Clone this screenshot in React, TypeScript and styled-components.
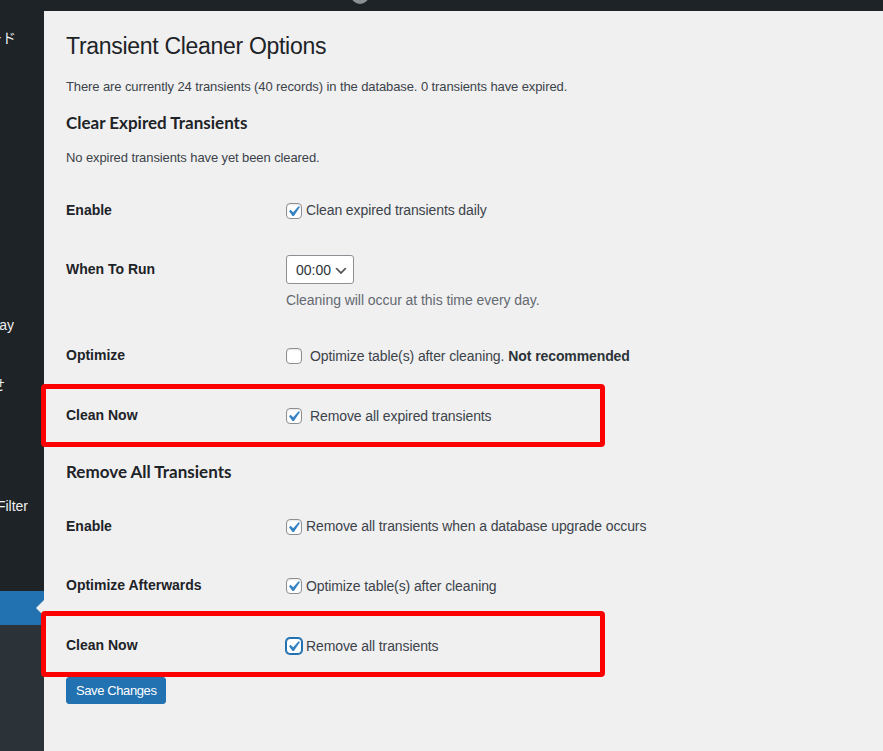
import React from "react";
import styled, { createGlobalStyle, css } from "styled-components";

const FONT = `"Segoe UI", "Liberation Sans", Arial, "Noto Sans CJK JP", sans-serif`;

const GlobalStyle = createGlobalStyle`
  *, *::before, *::after { box-sizing: border-box; }
  html, body { margin: 0; padding: 0; }
  body { background: #f0f0f1; font-family: ${FONT}; color: #3c434a; font-size: 13px; }
`;

const Shell = styled.div`
  display: flex;
  flex-direction: column;
  width: 100%;
  height: 751px;
  overflow: hidden;
  background: #f0f0f1;
`;

const AdminBar = styled.header`
  height: 11px;
  flex: none;
  background: #1d2327;
  display: flex;
  align-items: flex-start;
  padding-left: 351px;
  overflow: hidden;
`;

const AvatarStub = styled.span`
  width: 18px;
  height: 18px;
  border-radius: 50%;
  background: #8c8f94;
  margin-top: -14px;
`;

const Body = styled.div`
  flex: 1;
  display: grid;
  grid-template-columns: 44px 1fr;
  min-height: 0;
`;

const Sidebar = styled.nav`
  background: #1d2327;
  display: flex;
  flex-direction: column;
  overflow: hidden;
`;

const MenuItem = styled.div<{ $gap: number; $active?: boolean }>`
  position: relative;
  flex: none;
  height: 34px;
  margin-top: ${(p) => p.$gap}px;
  display: flex;
  align-items: center;
  color: #f0f0f1;
  font-size: 14px;
  ${(p) =>
    p.$active &&
    css`
      background: #2271b1;
      color: #fff;
      &::after {
        content: "";
        position: absolute;
        right: 0;
        top: 50%;
        margin-top: -8px;
        border: 8px solid transparent;
        border-right-color: #f0f0f1;
      }
    `}
`;

const MenuLabel = styled.span<{ $end: number }>`
  width: ${(p) => p.$end}px;
  overflow: hidden;
  white-space: nowrap;
  display: flex;
  justify-content: flex-end;
  line-height: 18px;
`;

const Submenu = styled.div`
  flex: 1;
  background: #2c3338;
`;

const Content = styled.main`
  display: flex;
  flex-direction: column;
  padding: 0 20px 0 22px;
  min-width: 0;
`;

const Title = styled.h1`
  margin: 20px 0 0;
  font-size: 23px;
  font-weight: 400;
  line-height: 30px;
  letter-spacing: -0.3px;
  color: #1d2327;
`;

const Text = styled.p<{ $mt: number }>`
  margin: ${(p) => p.$mt}px 0 0;
  font-size: 13px;
  line-height: 19px;
  letter-spacing: -0.1px;
  color: #3c434a;
`;

const SectionTitle = styled.h2<{ $mt: number }>`
  margin: ${(p) => p.$mt}px 0 0;
  font-family: Lato, ${FONT};
  font-size: 17px;
  font-weight: 700;
  line-height: 22px;
  color: #1d2327;
`;

const FormTable = styled.div<{ $mt: number }>`
  margin-top: ${(p) => p.$mt}px;
  display: flex;
  flex-direction: column;
`;

type Mark = { top: number; height: number };

const Row = styled.div<{ $h: number; $mark?: Mark }>`
  position: relative;
  display: grid;
  grid-template-columns: 220px 1fr;
  height: ${(p) => p.$h}px;
  ${(p) =>
    p.$mark &&
    css`
      &::after {
        content: "";
        position: absolute;
        z-index: 2;
        left: -25px;
        width: 564px;
        top: ${p.$mark.top}px;
        height: ${p.$mark.height}px;
        border: 5px solid #ff0000;
        border-radius: 4px;
        pointer-events: none;
      }
    `}
`;

const Label = styled.div`
  padding-top: 20px;
  font-size: 14px;
  font-weight: 600;
  line-height: 19px;
  color: #1d2327;
`;

const Field = styled.div<{ $stack?: boolean }>`
  display: flex;
  ${(p) =>
    p.$stack
      ? css`
          flex-direction: column;
          align-items: flex-start;
          padding-top: 15px;
        `
      : css`
          align-items: center;
        `}
`;

const CheckLabel = styled.label<{ $gap: number }>`
  display: inline-flex;
  align-items: center;
  gap: ${(p) => p.$gap}px;
  font-size: 14px;
  line-height: 19px;
  letter-spacing: -0.1px;
  color: #3c434a;
`;

const Box = styled.span<{ $focus?: boolean }>`
  position: relative;
  flex: none;
  width: 16px;
  height: 16px;
  border: 1px solid #8c8f94;
  border-radius: 4px;
  background: #fff;
  box-shadow: inset 0 1px 2px rgba(0, 0, 0, 0.1);
  ${(p) =>
    p.$focus &&
    css`
      border-color: #2271b1;
      box-shadow: 0 0 0 1px #2271b1;
    `}
`;

const Tick = styled.svg`
  position: absolute;
  left: -4px;
  top: -3px;
  width: 21px;
  height: 21px;
`;

const Strong = styled.strong`
  font-weight: 600;
  margin-left: 4px;
  color: #2c3338;
`;

const Select = styled.div`
  display: inline-flex;
  align-items: center;
  justify-content: space-between;
  width: 68px;
  height: 29px;
  padding: 0 4px 0 9px;
  border: 1px solid #8c8f94;
  border-radius: 3px;
  background: #fff;
  font-size: 14px;
  color: #2c3338;
`;

const Chevron = styled.svg`
  width: 16px;
  height: 16px;
  margin-top: 2px;
`;

const Description = styled.p`
  margin: 7px 0 0;
  font-size: 14px;
  line-height: 18px;
  letter-spacing: -0.05px;
  color: #646970;
`;

const Submit = styled.button`
  align-self: flex-start;
  margin-top: 1px;
  height: 27px;
  padding: 0 9px;
  background: #2271b1;
  border: 1px solid #2271b1;
  border-radius: 3px;
  color: #fff;
  font-family: ${FONT};
  font-size: 13px;
  letter-spacing: -0.4px;
  line-height: 25px;
  cursor: pointer;
`;

function Checkbox({ checked, focus }: { checked?: boolean; focus?: boolean }) {
  return (
    <Box $focus={focus}>
      {checked && (
        <Tick viewBox="0 0 20 20">
          <path d="M14.83 4.89l1.34.94-5.81 8.38H9.02L5.78 9.67l1.34-1.25 2.57 2.4z" fill="#3582c4" />
        </Tick>
      )}
    </Box>
  );
}

const menu: { label?: string; end?: number; gap: number; active?: boolean }[] = [
  { label: "ダッシュボード", end: 16, gap: 10 },
  { label: "Display", end: 14, gap: 253 },
  { label: "お問い合わせ", end: 5, gap: 26 },
  { label: "Search Filter", end: 28, gap: 87 },
  { gap: 68, active: true },
];

export default function App() {
  return (
    <>
      <GlobalStyle />
      <Shell>
        <AdminBar>
          <AvatarStub />
        </AdminBar>
        <Body>
          <Sidebar>
            {menu.map((m, i) => (
              <MenuItem key={i} $gap={m.gap} $active={m.active}>
                {m.label && <MenuLabel $end={m.end ?? 0}>{m.label}</MenuLabel>}
              </MenuItem>
            ))}
            <Submenu />
          </Sidebar>
          <Content>
            <Title>Transient Cleaner Options</Title>
            <Text $mt={16}>
              There are currently 24 transients (40 records) in the database. 0 transients have expired.
            </Text>
            <SectionTitle $mt={16}>Clear Expired Transients</SectionTitle>
            <Text $mt={14}>No expired transients have yet been cleared.</Text>
            <FormTable $mt={14}>
              <Row $h={59}>
                <Label>Enable</Label>
                <Field>
                  <CheckLabel $gap={4}>
                    <Checkbox checked />
                    Clean expired transients daily
                  </CheckLabel>
                </Field>
              </Row>
              <Row $h={86}>
                <Label>When To Run</Label>
                <Field $stack>
                  <Select>
                    <span>00:00</span>
                    <Chevron viewBox="0 0 20 20">
                      <path d="M5 6l5 5 5-5 2 1-7 7-7-7 2-1z" fill="#555" />
                    </Chevron>
                  </Select>
                  <Description>Cleaning will occur at this time every day.</Description>
                </Field>
              </Row>
              <Row $h={60}>
                <Label>Optimize</Label>
                <Field>
                  <CheckLabel $gap={8}>
                    <Checkbox />
                    <span>
                      Optimize table(s) after cleaning.<Strong>Not recommended</Strong>
                    </span>
                  </CheckLabel>
                </Field>
              </Row>
              <Row $h={60} $mark={{ top: -2, height: 63 }}>
                <Label>Clean Now</Label>
                <Field>
                  <CheckLabel $gap={8}>
                    <Checkbox checked />
                    Remove all expired transients
                  </CheckLabel>
                </Field>
              </Row>
            </FormTable>
            <SectionTitle $mt={15}>Remove All Transients</SectionTitle>
            <FormTable $mt={14}>
              <Row $h={59}>
                <Label>Enable</Label>
                <Field>
                  <CheckLabel $gap={4}>
                    <Checkbox checked />
                    Remove all transients when a database upgrade occurs
                  </CheckLabel>
                </Field>
              </Row>
              <Row $h={60}>
                <Label>Optimize Afterwards</Label>
                <Field>
                  <CheckLabel $gap={4}>
                    <Checkbox checked />
                    Optimize table(s) after cleaning
                  </CheckLabel>
                </Field>
              </Row>
              <Row $h={60} $mark={{ top: -5, height: 66 }}>
                <Label>Clean Now</Label>
                <Field>
                  <CheckLabel $gap={4}>
                    <Checkbox checked focus />
                    Remove all transients
                  </CheckLabel>
                </Field>
              </Row>
            </FormTable>
            <Submit type="button">Save Changes</Submit>
          </Content>
        </Body>
      </Shell>
    </>
  );
}
